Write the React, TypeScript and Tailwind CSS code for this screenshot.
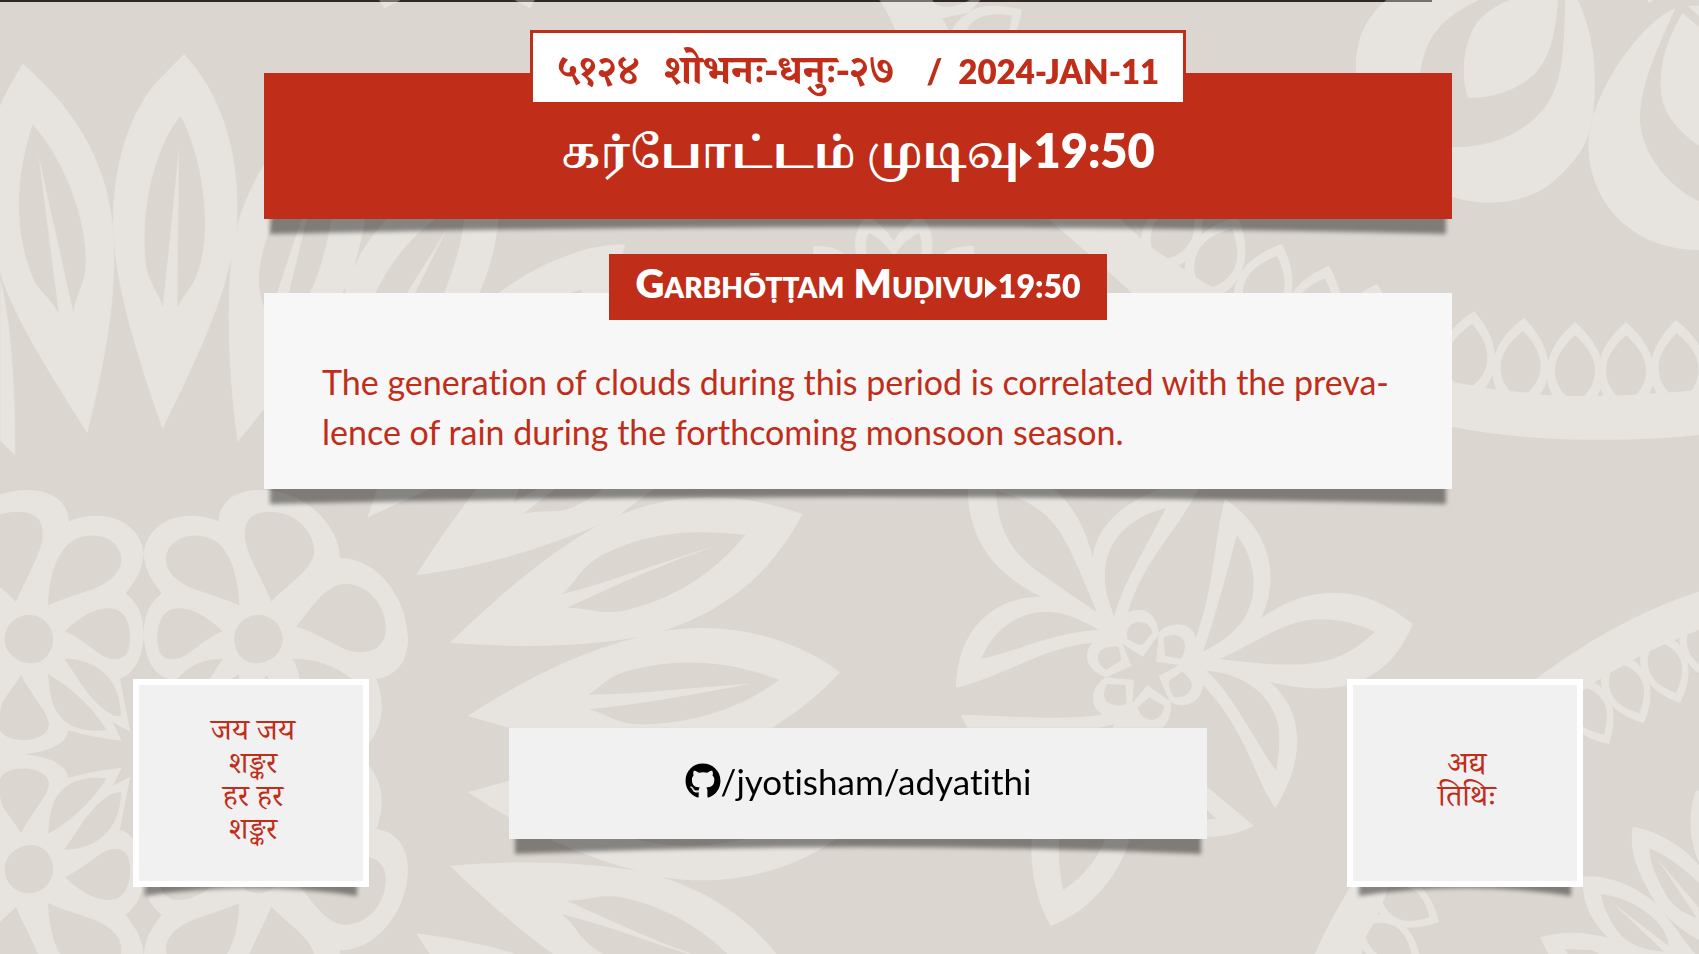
import type { ReactNode } from "react";
import { FaGithub } from "react-icons/fa";

type DropSpec = { x: number; y: number; turn: number; size: number };

const drops: DropSpec[] = [
  { x: 1474, y: 311, turn: 8, size: 1 },
  { x: 1524, y: 318, turn: 4, size: 1 },
  { x: 1575, y: 322, turn: 0, size: 1 },
  { x: 1626, y: 322, turn: 0, size: 1 },
  { x: 1676, y: 320, turn: -3, size: 1 },
  { x: 1727, y: 314, turn: -6, size: 1 },
  { x: 1197, y: 190, turn: 30, size: 1 },
  { x: 1238, y: 217, turn: 27, size: 1 },
  { x: 1282, y: 244, turn: 22, size: 1 },
  { x: 1329, y: 266, turn: 19, size: 1 },
  { x: 1377, y: 284, turn: 16, size: 1 },
  { x: 1717, y: 683, turn: 161, size: 0.82 },
  { x: 1680, y: 703, turn: 158, size: 0.82 },
  { x: 1644, y: 723, turn: 154, size: 0.82 },
  { x: 1609, y: 744, turn: 150, size: 0.82 },
  { x: 1439, y: 922, turn: 118, size: 0.82 },
  { x: 1421, y: 962, turn: 122, size: 0.82 },
];

const dropPath =
  "M0 0C-16 14-28 31-28 51C-28 64-24 72-19 78L19 78C24 72 28 64 28 51C28 31 16 14 0 0ZM0 13C-12 24-20 36-20 48C-20 60-15 68-9 74L9 74C15 68 20 60 20 48C20 36 12 24 0 13Z";

const blossomPath =
  "M398 250C405 180 460 137 528 137C560 137 590 145 606 155C605 100 650 60 720 60C850 60 940 170 942 264C1050 265 1130 390 1130 508C1130 570 1100 620 1042 627C1065 690 1065 760 1022 820L850 853L746 853C666 850 606 820 608 780C566 795 516 805 459 812L484 757L435 785L464 626C426 615 398 560 398 490C400 430 415 400 448 370C430 345 402 310 398 250Z" +
  "M783 507C783 467 753 435 716 435C679 435 649 467 649 507C649 547 675 580 708 580C750 580 783 547 783 507Z" +
  "M752 395C700 270 670 230 680 170C688 125 740 118 790 132C850 155 880 220 868 262C850 310 800 340 752 395Z" +
  "M663 406C660 320 640 250 600 215C550 180 470 195 460 260C455 310 500 345 560 365C600 380 630 390 663 406Z" +
  "M616 484C570 435 520 405 475 418C435 435 430 500 440 540C450 570 480 575 510 558C550 530 580 500 616 484Z" +
  "M820 470C860 420 900 340 960 341C1030 345 1075 420 1068 490C1060 545 1010 555 960 540C910 515 870 485 820 470Z" +
  "M618 566C536 565 461 620 461 738C496 745 546 680 566 650C586 620 601 590 618 566Z" +
  "M663 613C616 640 546 700 501 780C576 790 626 760 646 710C658 680 659 650 663 613Z" +
  "M738 615C706 680 661 730 660 765C666 810 736 820 776 800C816 780 796 720 786 690C766 660 751 640 738 615Z" +
  "M810 566C880 565 930 590 975 627L830 627C828 605 820 585 810 566Z";

function LeafFan() {
  return (
    <g fillRule="evenodd">
      <path d="M-63 57L-90 142L82 57Z" />
      <path d="M45 315C100 220 160 130 212 57L705 57C680 75 650 100 608 135L545 168C380 240 230 290 45 315ZM330 57L315 97L380 57ZM340 132C400 115 440 140 500 100C530 85 550 70 560 57L430 57Z" />
      <path d="M138 518C280 370 400 260 545 168L608 135C780 60 950 70 1115 132C1020 330 880 430 722 485L660 502C500 530 350 535 138 518ZM448 373C500 325 490 300 560 255C680 190 800 175 957 195C860 320 750 390 620 422C550 435 540 415 462 413C600 345 740 275 877 228C750 265 600 330 448 373Z" />
      <path d="M187 738C330 640 480 550 660 502L722 485C900 450 1090 500 1219 607C1170 665 1100 730 1030 773L302 773ZM520 674C560 650 570 620 640 600C780 560 920 575 1050 630C950 710 830 755 690 763C600 765 600 745 524 718C680 700 830 670 972 641C830 650 680 672 520 674Z" />
      <path d="M302 773L1030 773L900 840L430 840Z" />
    </g>
  );
}

function Blossoms() {
  return (
    <g fillRule="evenodd">
      <path d={blossomPath} />
      <path d={blossomPath} transform="translate(796 0) scale(-1 1)" />
    </g>
  );
}

function Backdrop() {
  return (
    <svg
      aria-hidden="true"
      viewBox="0 0 1699 954"
      preserveAspectRatio="xMidYMid slice"
      className="absolute inset-0 -z-10 h-full w-full"
    >
      <rect x="0" y="0" width="1432" height="2" fill="#312923" />
      <g fill="#fff" opacity="0.34" fillRule="evenodd">
        <g transform="scale(.361 .33333)">
          <path d="M62 191C180 300 300 460 314 700L316 745C320 950 275 1150 242 1300C150 1140 40 960 0 820L-20 700L-20 360L0 318C15 275 40 235 62 191ZM90 373C180 480 250 680 235 820C228 860 210 890 203 937L106 463L163 943C140 890 110 880 90 830C40 700 40 540 90 373Z" />
          <path d="M0 835C30 960 42 1150 42 1366L0 1322Z" />
          <path d="M510 162C620 290 670 480 655 690L642 760C620 900 550 1070 450 1286C390 1100 330 900 317 745L313 690C308 480 370 310 450 228ZM500 347C560 470 590 680 548 815C535 860 510 880 491 923L496 440L451 920C435 870 415 850 405 800C385 630 430 440 500 347Z" />
          <path d="M731 493C700 550 665 630 655 690L641 760C625 950 635 1150 658 1326L740 1216L740 940C705 870 710 780 760 657L835 657L767 879L800 879L850 657L918 657C905 740 885 820 858 879L948 879L957 862L955 879L1040 879C1080 790 1130 720 1205 657L1070 657C1030 710 1000 750 980 805C990 760 1008 700 1010 657L1010 480Z" />
          <path d="M1285 657C1280 730 1255 810 1230 879L1328 879C1355 810 1375 740 1380 657Z" />
          <path d="M1240 683L1127 879L1150 879Z" />
          <path d="M1382 879C1440 830 1510 790 1568 768C1620 745 1680 733 1731 733C1720 790 1700 840 1690 879L1610 879L1613 868L1580 879Z" />
          <path d="M1050 0L1065 25L1107 2L1107 0ZM1425 0L1468 25L1481 0Z" />
        </g>

        <g transform="translate(566 0) scale(.361 .33333)">
          <path d="M868 0L1148 0L1118 35C1160 5 1220 20 1262 28C1262 50 1255 70 1248 90L1228 90L1236 47C1170 35 1130 50 1110 90L912 90C900 60 885 25 868 0ZM1015 0C1030 30 1080 25 1118 0ZM1042 55L1118 37C1090 55 1075 75 1070 90L1060 90Z" />
          <path d="M825 657C800 690 798 730 803 762L1013 762C1018 730 1015 690 992 657L965 657C935 685 915 705 908 725C900 705 880 685 850 657ZM838 698C870 715 890 740 903 762L833 762C828 740 830 720 838 698ZM978 698C946 715 926 740 913 762L983 762C988 740 986 720 978 698Z" />
          <path d="M685 738C730 738 750 745 770 762L685 762ZM1130 738C1085 738 1065 745 1045 762L1130 762Z" />
        </g>

        <path d="M1048 219L1120 219L1148 245L1170 260L1220 293L1132 293L1090 255Z" />

        <g transform="translate(1132 0) scale(.36166 .33333)">
          <path d="M703 0C640 60 615 130 620 219L620 450L885 590C980 625 1100 610 1170 540C1220 490 1250 450 1263 400L1275 350C1290 200 1270 80 1232 0ZM960 0C860 50 810 110 797 219C797 300 820 400 885 441C1000 445 1110 390 1160 290C1195 220 1195 100 1198 0L1178 0C1170 100 1160 170 1110 225C1060 275 990 295 930 293C910 240 910 130 960 60C985 30 1020 10 1045 0Z" />
          <path d="M1275 350C1310 220 1420 60 1503 25C1450 150 1400 270 1405 370C1415 480 1500 570 1568 604L1568 750C1380 750 1250 600 1263 405Z" />
          <path d="M1522 38C1480 120 1450 200 1466 300C1480 360 1530 410 1568 438L1568 82Z" />
          <path d="M1537 17L1568 17L1568 50ZM1425 0L1430 10L1440 0Z" />
          <path d="M885 1145C1000 1170 1100 1187 1240 1188C1400 1188 1500 1175 1568 1170L1568 1305C1400 1325 1100 1330 885 1280Z" />
        </g>

        <g transform="translate(0 470) scale(.361 .33333)">
          <Blossoms />
          <g transform="translate(0 1705) scale(1 -1)">
            <Blossoms />
          </g>
        </g>

        <g transform="translate(400 470) scale(.361 .33333)">
          <LeafFan />
          <g transform="translate(0 1705) scale(1 -1)">
            <LeafFan />
          </g>
        </g>

        <g transform="translate(900 470) scale(.35714 .33333)">
          <path d="M190 57C190 180 240 300 395 380C260 380 160 480 157 653C290 620 400 530 540 518C510 550 520 600 577 622C530 650 530 715 568 733C450 755 300 735 170 735L188 773L555 773L600 763L595 773L735 773C750 760 762 730 758 695C790 720 845 700 848 645C970 780 990 920 1051 1015C1140 860 1130 720 1035 635C1280 700 1380 600 1436 463C1300 340 1150 340 1012 443C1080 280 1000 150 910 87C880 200 880 350 828 505C820 450 750 455 724 488C720 430 680 405 638 428C680 270 780 180 835 57L730 57C620 100 550 170 540 262C520 180 490 110 430 57ZM268 62C275 180 310 240 380 300C440 345 500 390 552 427C520 350 490 260 450 190C410 120 350 85 268 62ZM745 113C620 150 570 230 574 330C575 370 590 410 600 440C620 350 680 250 745 113ZM227 567C260 480 330 425 410 425C460 425 510 450 557 480C440 485 350 535 227 567ZM943 195C990 260 1005 350 975 420C960 470 900 520 848 545C880 450 910 330 943 195ZM893 567C980 530 1060 460 1150 449C1220 442 1280 460 1329 485C1230 590 1140 600 893 567ZM858 602C960 610 1040 670 1060 770C1065 820 1060 860 1053 903C980 790 930 670 858 602ZM637 508C630 470 650 455 670 456C695 458 700 470 708 487L680 522C670 530 660 520 637 508ZM738 503C760 490 790 490 797 520C800 545 790 560 785 567L742 557ZM790 605C820 630 825 650 805 672C790 685 770 682 765 680C755 660 752 645 753 632ZM697 682L740 708C738 735 720 750 703 750C680 745 670 730 666 713ZM580 642L632 645L634 700C620 712 590 708 575 690C568 672 572 660 580 642ZM612 530L620 570L577 600C555 585 550 565 558 545C575 530 595 528 612 530ZM623 522L680 560L725 492L717 575L782 585L724 618L755 693L692 645L651 700L655 630L577 622L648 588Z" />
          <path d="M368 1107C365 1200 380 1290 422 1368C520 1330 610 1230 643 1107ZM446 1107C443 1170 448 1215 457 1260C520 1215 555 1160 575 1107Z" />
          <path d="M857 948L991 1068C940 1095 890 1102 857 1100ZM857 1017L886 1047L857 1048Z" />
        </g>

        <g transform="translate(1300 470) scale(.33333)">
          <path d="M700 632C850 520 1020 420 1197 365L1197 480C1060 530 920 610 849 662L700 700Z" />
          <path d="M150 1251C110 1320 70 1390 45 1452L185 1452C188 1420 195 1400 215 1370L260 1270L260 1251Z" />
          <path d="M998 1070C985 1150 1020 1220 1068 1300L1098 1335C1130 1370 1170 1395 1197 1410L1197 1185C1150 1130 1080 1085 998 1070ZM1048 1135C1100 1155 1170 1210 1197 1240L1197 1313L1073 1168L1192 1345C1150 1330 1110 1310 1080 1240C1060 1200 1050 1170 1048 1135Z" />
          <path d="M848 1220C920 1210 1010 1250 1068 1300L1098 1335C1130 1380 1160 1420 1185 1452L1050 1452C1030 1440 990 1425 925 1403C880 1360 852 1310 848 1250ZM903 1272C980 1280 1060 1330 1090 1380C1105 1405 1105 1420 1105 1427L935 1297L1093 1445C1020 1440 980 1420 950 1380C925 1345 910 1310 903 1272Z" />
          <path d="M720 1402C800 1380 860 1388 925 1403C990 1425 1030 1440 1050 1452L745 1452ZM795 1437L875 1440L900 1452L803 1452Z" />
          <path d="M1188 962C1160 1040 1170 1110 1197 1180L1197 962Z" />
        </g>

        {drops.map((d) => (
          <path
            key={`${d.x}-${d.y}`}
            d={dropPath}
            transform={`translate(${d.x} ${d.y}) rotate(${d.turn}) scale(${d.size})`}
          />
        ))}
      </g>
    </svg>
  );
}

/** Curled-paper shadow that hangs below a card. */
function CurlShadow({ small = false }: { small?: boolean }) {
  return (
    <svg
      aria-hidden="true"
      viewBox="0 0 100 20"
      preserveAspectRatio="none"
      className={
        small
          ? "absolute inset-x-3 -bottom-[9px] -z-10 h-5 w-auto min-w-[calc(100%-24px)] blur-[2px]"
          : "absolute inset-x-[6px] -bottom-[15px] -z-10 h-5 w-auto min-w-[calc(100%-12px)] blur-[2px]"
      }
    >
      <path
        d={small ? "M0 0H100V20Q50 4 0 20Z" : "M0 0H100V20Q50 6 0 20Z"}
        fill="#000"
        fillOpacity="0.42"
      />
    </svg>
  );
}

/** Narrow pointer between an event name and the time it ends. */
function TimePointer() {
  return (
    <svg aria-hidden="true" viewBox="0 0 12 20" className="mx-px h-5 w-3 fill-current">
      <path d="M0 0L12 10L0 20Z" />
    </svg>
  );
}

function SideCard({ children }: { children: ReactNode }) {
  return (
    <div className="relative isolate w-[236px] shrink-0">
      <CurlShadow small />
      <div className="flex h-[208px] items-center justify-center border-6 border-white bg-[#f1f1f1] pt-1 pl-1 text-center font-['Noto_Serif_Devanagari','Noto_Sans',serif] text-[31px] leading-[33px] text-[#c02d19]">
        {children}
      </div>
    </div>
  );
}

export default function App() {
  return (
    <main className="relative isolate flex min-h-screen flex-col items-center overflow-hidden bg-[#dbd6cf] pt-[30px] pl-[17px] font-['Lato','Noto_Sans',sans-serif] [font-variant-ligatures:no-common-ligatures]">
      <Backdrop />

      <header className="flex w-full max-w-[1188px] flex-col items-center">
        <p className="z-10 flex h-[75px] items-baseline gap-4 border-[3px] border-[#c02d19] bg-white px-6 text-[33px] leading-[76px] font-extrabold whitespace-pre text-[#c02d19]">
          <span className="mr-4 font-['Noto_Serif_Devanagari','Noto_Sans',serif] text-[41px] font-bold">
            ५१२४  शोभनः-धनुः-२७
          </span>
          <span>/</span>
          <span>2024-JAN-11</span>
        </p>
        <div className="relative isolate -mt-8 w-full">
          <CurlShadow />
          <h1 className="flex h-[146px] items-baseline justify-center bg-[#c02d19] text-[47px] leading-[154px] font-extrabold text-white">
            <span className="font-['Noto_Serif_Tamil','FreeSerif','Noto_Sans',serif] text-[43px] font-bold">
              கர்போட்டம் முடிவு
            </span>
            <TimePointer />
            <span>19:50</span>
          </h1>
        </div>
      </header>

      <section className="mt-[35px] flex w-full max-w-[1188px] flex-col items-center">
        <h2 className="z-10 flex h-[66px] items-baseline bg-[#c02d19] px-[26px] text-[32px] leading-[58px] font-extrabold text-white">
          <span className="text-[40px] [font-variant-caps:small-caps]">Garbhōṭṭam Muḍivu</span>
          <TimePointer />
          <span>19:50</span>
        </h2>
        <div className="relative isolate -mt-[27px] w-full">
          <CurlShadow />
          <p className="bg-[#f7f7f7] px-[58px] pt-[64px] pb-8 text-[34px] leading-[50px] whitespace-nowrap text-[#c02d19]">
            The generation of clouds during this period is correlated with the preva-
            <br />
            lence of rain during the forthcoming monsoon season.
          </p>
        </div>
      </section>

      <footer className="mt-[190px] flex w-full max-w-[1450px] items-center justify-between gap-[140px]">
        <SideCard>
          <p>
            जय जय
            <br />
            शङ्कर
            <br />
            हर हर
            <br />
            शङ्कर
          </p>
        </SideCard>
        <div className="relative isolate flex-1">
          <CurlShadow />
          <a
            href="https://github.com/jyotisham/adyatithi"
            className="flex h-[111px] items-center justify-center bg-[#f1f1f1] pb-1 text-[35px] text-black"
          >
            <FaGithub className="size-9" aria-hidden="true" />
            /jyotisham/adyatithi
          </a>
        </div>
        <SideCard>
          <p>
            अद्य
            <br />
            तिथिः
          </p>
        </SideCard>
      </footer>
    </main>
  );
}
